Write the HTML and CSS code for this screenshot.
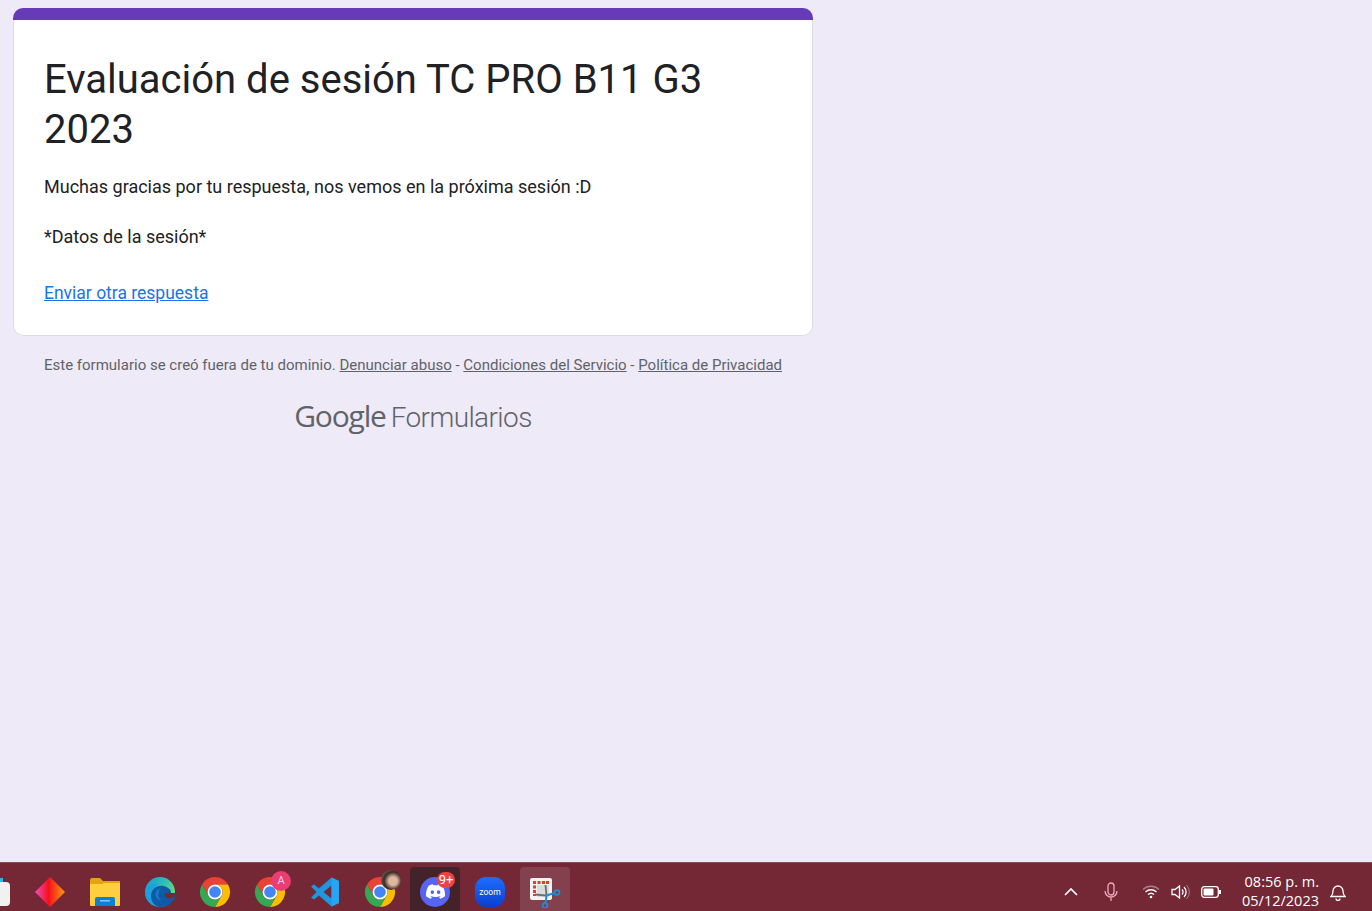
FILE: index.html
```html
<!DOCTYPE html>
<html lang="es">
<head>
    <title>Evaluación de sesión TC PRO B11 G3 2023</title>
    <link rel="stylesheet" href="styles.css">
</head>
<body>
    <svg class="defs" width="0" height="0" aria-hidden="true">
        <symbol id="chrome" viewBox="0 0 32 32">
            <path fill="#ea4335" d="M3 8.5A15 15 0 0 1 29 8.5L16 8.5A7.5 7.5 0 0 0 9.5 19.75Z"/>
            <path fill="#fbbc04" d="M29 8.5A15 15 0 0 1 16 31L22.5 19.75A7.5 7.5 0 0 0 16 8.5Z"/>
            <path fill="#34a853" d="M16 31A15 15 0 0 1 3 8.5L9.5 19.75A7.5 7.5 0 0 0 22.5 19.75Z"/>
            <circle cx="16" cy="16" r="7.5" fill="#fff"/>
            <circle cx="16" cy="16" r="5.8" fill="#4285f4"/>
        </symbol>
    </svg>

    <main class="page">
        <section class="card">
            <div class="card-bar"></div>
            <div class="card-body">
                <h1 class="card-title">Evaluación de sesión TC PRO B11 G3 2023</h1>
                <p class="card-text">Muchas gracias por tu respuesta, nos vemos en la próxima sesión :D</p>
                <p class="card-text card-text-gap">*Datos de la sesión*</p>
                <a class="card-link" href="#">Enviar otra respuesta</a>
            </div>
        </section>
        <p class="notice">Este formulario se creó fuera de tu dominio. <a href="#">Denunciar abuso</a> - <a href="#">Condiciones del Servicio</a> - <a href="#">Política de Privacidad</a></p>
        <div class="brand"><span class="brand-google">Google</span> <span class="brand-forms">Formularios</span></div>
    </main>

    <footer class="taskbar">
        <div class="apps">
            <!-- notes app, cut off by the screen edge -->
            <div class="app">
                <svg width="30" height="32" viewBox="0 0 30 32"><path fill="#29b6f6" d="M15 2h8v6h-8z"/><rect x="6" y="6" width="24" height="24" rx="4" fill="#f1f1f1"/></svg>
            </div>
            <div class="app">
                <svg width="30" height="30" viewBox="0 0 30 30">
                    <defs><linearGradient id="gem" x1="0" y1="0" x2="1" y2="0"><stop offset="0" stop-color="#f04fc0"/><stop offset=".45" stop-color="#f5101c"/><stop offset="1" stop-color="#fb9a12"/></linearGradient></defs>
                    <path fill="url(#gem)" d="M15 0L30 15 15 30 0 15Z"/>
                </svg>
            </div>
            <div class="app">
                <svg width="30" height="30" viewBox="0 0 30 30">
                    <path fill="#e4a30f" d="M0 3a2 2 0 0 1 2-2h8l3 3h17v8H0Z"/>
                    <path fill="#fdcf3e" d="M0 7h12l2-1h16v22a1 1 0 0 1-1 1H1a1 1 0 0 1-1-1Z"/>
                    <path fill="#0f7fd1" d="M5 22a2 2 0 0 1 2-2h16a2 2 0 0 1 2 2v7H5Z"/>
                    <rect x="10" y="23" width="10" height="1.6" fill="#7cc6f3"/>
                </svg>
            </div>
            <div class="app">
                <svg width="30" height="30" viewBox="0 0 30 30">
                    <defs><linearGradient id="edge" x1="0" y1="0" x2="1" y2=".6"><stop offset="0" stop-color="#1597dc"/><stop offset=".55" stop-color="#2cc0b8"/><stop offset="1" stop-color="#6fe06a"/></linearGradient></defs>
                    <circle cx="15" cy="15" r="15" fill="url(#edge)"/>
                    <path fill="#1a9fe0" d="M0 15C3 8 9 6 14 7c-5 2-8 6-8 12 0 4 2 8 6 10.700C5 28.500 0 22 0 15Z"/>
                    <path fill="#0d5aa7" d="M6 19c0-7 6-11 12-10 4 .7 8 3 8 6v1h4v5c-3 5-7 9-15 9-5 0-9-5-9-11Z"/>
                    <path fill="#1a78c4" d="M14 16c-2 3 0 6 3 7.500-4 0-7-3-6.500-7 .4-2.500 2-4 4.500-4.500-1 1-1 2.500-1 4Z"/>
                    <path fill="#742735" d="M20 16h9.800c0 1.600-.4 3.200-1.200 4.800-2.500 1-6 1-7.600-.3C19.500 19 19 16 20 16Z"/>
                </svg>
            </div>
            <div class="app"><svg width="32" height="32"><use href="#chrome"/></svg></div>
            <div class="app">
                <svg width="32" height="32"><use href="#chrome"/></svg>
                <span class="badge-avatar badge-pink">A</span>
            </div>
            <div class="app">
                <svg width="30" height="30" viewBox="0 0 30 30">
                    <path fill="#1e96e0" fill-rule="evenodd" d="M21.500.5L29 4v22l-7.500 3.500L9 18.500l-5 4L1 20.500 6.500 15 1 9.500 4 7.500l5 4ZM21.500 8.500L13.500 15l8 6.500Z"/>
                    <path fill="#0f7cc6" d="M21.500.5L9 11.500l-5-4L1 9.500 3 7.500l1-.2 5 3.700L21.500.5Z"/>
                    <path fill="#26a6f2" d="M21.500.5L29 4v22l-7.500 3.500Z"/>
                </svg>
            </div>
            <div class="app">
                <svg width="32" height="32"><use href="#chrome"/></svg>
                <span class="badge-photo"></span>
            </div>
            <div class="app app-open">
                <span class="discord">
                    <svg width="19" height="15" viewBox="0 0 127.14 96.36"><path fill="#fff" d="M107.7,8.07A105.15,105.15,0,0,0,81.47,0a72.06,72.06,0,0,0-3.36,6.83A97.68,97.68,0,0,0,49,6.83,72.37,72.37,0,0,0,45.64,0,105.89,105.89,0,0,0,19.39,8.09C2.79,32.65-1.71,56.6.54,80.21h0A105.73,105.73,0,0,0,32.71,96.36,77.7,77.7,0,0,0,39.6,85.25a68.42,68.42,0,0,1-10.85-5.18c.91-.66,1.8-1.34,2.66-2a75.57,75.57,0,0,0,64.32,0c.87.71,1.76,1.39,2.66,2a68.68,68.68,0,0,1-10.87,5.19,77,77,0,0,0,6.89,11.1A105.25,105.25,0,0,0,126.6,80.22h0C129.24,52.84,122.09,29.11,107.7,8.07ZM42.45,65.69C36.18,65.69,31,60,31,53s5-12.74,11.43-12.74S54,46,53.89,53,48.84,65.69,42.45,65.69Zm42.24,0C78.41,65.69,73.25,60,73.25,53s5-12.74,11.44-12.74S96.23,46,96.12,53,91.08,65.69,84.69,65.69Z"/></svg>
                </span>
                <span class="badge-count">9+</span>
            </div>
            <div class="app"><span class="zoom">zoom</span></div>
            <div class="app app-active">
                <svg width="32" height="32" viewBox="0 0 32 32">
                    <rect x="1" y="2" width="22" height="22" rx="2" fill="#f3f3f3"/>
                    <rect x="8" y="9" width="12" height="12" fill="#dcdcdc"/>
                    <path fill="#d8432f" d="M4 5h3v3H4zM8.500 5h3v3h-3zM13 5h3v3h-3zM17 5h3v3h-3zM4 9.500h3v3H4zM4 14h3v3H4zM4 18h3v2H4z"/>
                    <path fill="none" stroke="#6f6f6f" stroke-width="1.800" d="M6 18.500l11 1M16.500 9l1 10.500"/>
                    <path fill="none" stroke="#1b8fd6" stroke-width="2" d="M17.500 19.500l8-2.500M17.500 19.500l-1 8"/>
                    <circle cx="28" cy="16.500" r="2.400" fill="none" stroke="#1b8fd6" stroke-width="1.800"/>
                    <circle cx="16" cy="29.500" r="2.400" fill="none" stroke="#1b8fd6" stroke-width="1.800"/>
                </svg>
            </div>
        </div>

        <div class="tray">
            <svg class="tray-caret" width="14" height="8" viewBox="0 0 14 8"><path fill="none" stroke="#fff" stroke-width="1.700" d="M1 7l6-6 6 6"/></svg>
            <svg class="tray-mic" width="14" height="20" viewBox="0 0 14 20"><rect x="4" y="1" width="6" height="12" rx="3" fill="none" stroke="#f0a9b8" stroke-width="1.300"/><path fill="none" stroke="#f0a9b8" stroke-width="1.300" d="M1 9a6 6 0 0 0 12 0M7 15v4"/></svg>
            <svg class="tray-wifi" width="18" height="14" viewBox="0 0 18 14"><path fill="none" stroke="#a8808a" stroke-width="1.300" d="M1 4.500a11.500 11.500 0 0 1 16 0"/><path fill="none" stroke="#fff" stroke-width="1.400" d="M3.500 7a8 8 0 0 1 11 0M6 9.500a4.500 4.500 0 0 1 6 0"/><circle cx="9" cy="12" r="1.300" fill="#fff"/></svg>
            <svg class="tray-sound" width="20" height="16" viewBox="0 0 20 16"><path fill="none" stroke="#fff" stroke-width="1.300" d="M1 5.500h3L8.500 2v12L4 10.500H1ZM11 5.500a3.500 3.500 0 0 1 0 5M13 3a7 7 0 0 1 0 10"/><path fill="none" stroke="#a8808a" stroke-width="1" d="M15.500 1a10 10 0 0 1 0 14"/></svg>
            <svg class="tray-battery" width="20" height="12" viewBox="0 0 20 12"><rect x=".7" y=".7" width="16.600" height="10.600" rx="2.500" fill="none" stroke="#fff" stroke-width="1.300"/><rect x="2.500" y="2.500" width="10" height="7" rx="1" fill="#fff"/><rect x="18" y="4" width="2" height="4" fill="#fff"/></svg>
            <div class="clock"><span>08:56 p. m.</span><span>05/12/2023</span></div>
            <svg class="tray-bell" width="16" height="18" viewBox="0 0 16 18"><path fill="none" stroke="#fff" stroke-width="1.300" d="M1 13.500c1.500-1.500 2-2.500 2-5.500a5 5 0 0 1 10 0c0 3 .5 4 2 5.500ZM6 15.500a2 2 0 0 0 4 0"/></svg>
        </div>
    </footer>
</body>
</html>
```

FILE: styles.css
```css
* {
    box-sizing: border-box;
}

html, body {
    margin: 0;
    height: 100%;
}

body {
    display: flex;
    flex-direction: column;
    height: 911px;
    overflow: hidden;
    background-color: #eeeaf8;
    font-family: Roboto, "Liberation Sans", sans-serif;
    color: #202124;
}

.defs {
    position: absolute;
}

/* form page */
.page {
    flex: 1;
    width: 826px;
    padding: 8px 13px 0;
}

.card {
    overflow: hidden;
    border-radius: 10px;
}

.card-bar {
    height: 12px;
    background-color: #673ab7;
}

.card-body {
    padding: 35px 30px 29px;
    background-color: #fff;
    border: 1px solid #dadce0;
    border-top: none;
    border-radius: 0 0 10px 10px;
}

.card-title {
    margin: 0 0 19px;
    font-size: 40px;
    font-weight: 400;
    line-height: 50px;
}

.card-text {
    margin: 0;
    font-size: 18px;
    line-height: 25px;
}

.card-text-gap {
    margin-top: 25px;
}

.card-link {
    display: block;
    margin-top: 32px;
    font-size: 17.5px;
    line-height: 25px;
    color: #1a73e8;
}

.notice {
    margin: 20px 0 0;
    font-size: 15px;
    line-height: 18px;
    text-align: center;
    color: #5f6368;
}

.notice a {
    color: #5f6368;
}

.brand {
    margin-top: 24px;
    text-align: center;
    line-height: 36px;
    color: #5f6368;
}

.brand-google {
    margin-right: 1px;
    font-family: "Open Sans", sans-serif;
    font-size: 30px;
    font-weight: 500;
    letter-spacing: -1.200px;
}

.brand-forms {
    font-size: 28px;
    font-weight: 300;
    letter-spacing: -.6px;
}

/* windows taskbar */
.taskbar {
    display: flex;
    justify-content: space-between;
    align-items: center;
    flex: none;
    height: 49px;
    background-color: #742735;
    border-top: 1px solid #8a4a58;
    color: #fff;
}

.apps {
    display: flex;
    gap: 5px;
    margin-left: -30px;
}

.app {
    position: relative;
    display: flex;
    justify-content: center;
    align-items: center;
    width: 50px;
    height: 44px;
    margin-top: 4px;
    padding-top: 5px;
    border-radius: 4px 4px 0 0;
}

.app-open {
    background-color: #44222a;
}

.app-active {
    background-color: #83404d;
}

.badge-avatar {
    position: absolute;
    top: 4px;
    right: 4px;
    width: 20px;
    height: 20px;
    border-radius: 50%;
    font-size: 11px;
    line-height: 20px;
    text-align: center;
    color: #ffd6e4;
}

.badge-pink {
    background-color: #ea3d74;
}

.badge-photo {
    position: absolute;
    top: 3px;
    right: 4px;
    width: 20px;
    height: 20px;
    border-radius: 50%;
    background: radial-gradient(circle at 60% 55%, #e0b8a0 0 25%, #3a2a26 55%, #a89a90 100%);
}

.discord {
    display: flex;
    justify-content: center;
    align-items: center;
    width: 30px;
    height: 30px;
    border-radius: 50%;
    background-color: #5865f2;
}

.badge-count {
    position: absolute;
    top: 5px;
    right: 5px;
    min-width: 18px;
    height: 16px;
    border-radius: 8px;
    background-color: #ed4245;
    font-size: 13px;
    line-height: 16px;
    text-align: center;
}

.zoom {
    display: flex;
    justify-content: center;
    align-items: center;
    width: 30px;
    height: 30px;
    border-radius: 11px;
    background: linear-gradient(#1f6dff, #0a3fd0);
    font-size: 8.500px;
}

.tray {
    display: flex;
    align-items: center;
    margin-right: 26px;
    padding-top: 9px;
}

.tray-caret {
    margin-right: 26px;
}

.tray-mic {
    margin-right: 24px;
}

.tray-wifi {
    margin-right: 11px;
}

.tray-sound {
    margin-right: 10px;
}

.tray-battery {
    margin-right: 21px;
}

.clock {
    display: flex;
    flex-direction: column;
    align-items: flex-end;
    margin-top: -2px;
    margin-right: 11px;
    font-family: "Open Sans", sans-serif;
    font-size: 14.500px;
    line-height: 19px;
}
```
